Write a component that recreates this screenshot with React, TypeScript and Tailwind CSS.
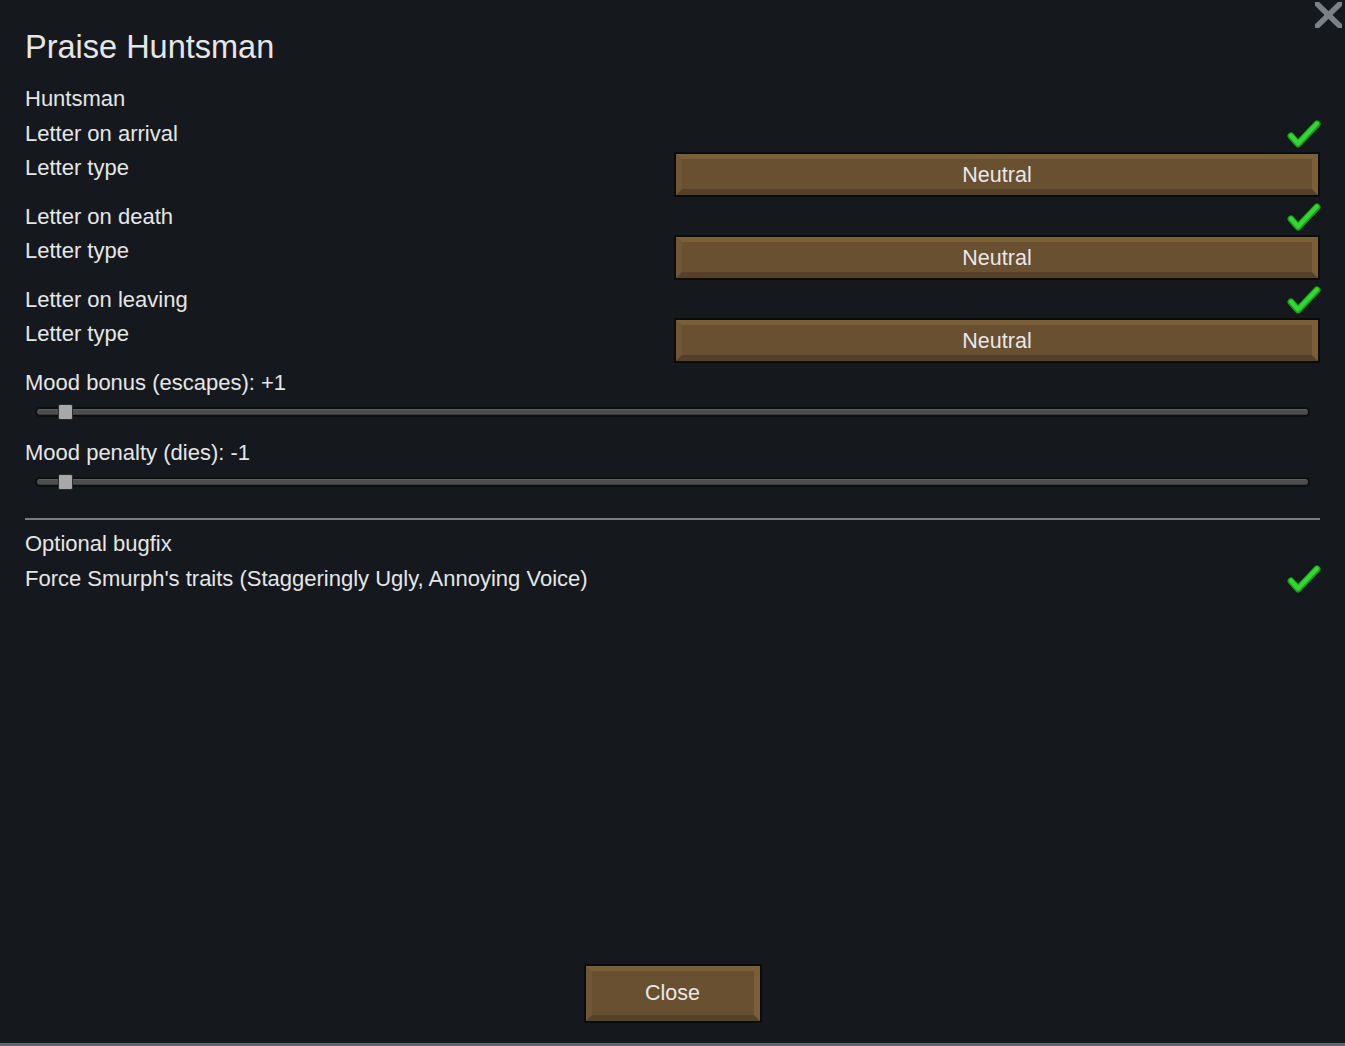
import type { ReactNode } from 'react'

const FONT = "font-['Liberation_Sans',Arial,sans-serif]"

function WoodButton({ label, className, textPad }: { label: string; className?: string; textPad: string }) {
  return (
    <div className={`border-2 border-[#0b0b0b] ${className ?? ''}`}>
      <div className={`flex h-full items-center justify-center border-[6px] border-t-[5px] border-t-[#7b6037] border-r-[#7b6037] border-b-[#55412a] border-l-[#6f5634] bg-[#685031] text-[21.5px] text-[#e8e8e8] ${textPad}`}>
        {label}
      </div>
    </div>
  )
}

function Check() {
  return (
    <svg width="36" height="32" viewBox="0 0 36 32" className="mr-[-2px]">
      <polyline points="5,19 12,27 31,7" fill="none" stroke="#0b1d0b" strokeWidth="9" strokeLinecap="round" strokeLinejoin="round" />
      <polyline points="5,19 12,27 31,7" fill="none" stroke="#1b9b1e" strokeWidth="7" strokeLinecap="round" strokeLinejoin="round" />
      <polyline points="5,18.5 12,26.5 31,6.5" fill="none" stroke="#34d634" strokeWidth="4.2" strokeLinecap="round" strokeLinejoin="round" />
    </svg>
  )
}

function Row({ children, right }: { children: ReactNode; right?: ReactNode }) {
  return (
    <div className="flex h-[35px] items-center justify-between">
      <span>{children}</span>
      {right}
    </div>
  )
}

function LetterTypeRow() {
  return (
    <div className="flex h-[48px] items-start justify-between">
      <span className="leading-[34px]">Letter type</span>
      <WoodButton label="Neutral" textPad="pt-[4px]" className="mt-[1px] h-[45px] w-[646px]" />
    </div>
  )
}

function Slider({ pos }: { pos: number }) {
  return (
    <div className="h-[35px] pt-[7px]">
      <div className="relative mx-[10px] h-[10px] rounded-full bg-[#0d0f11] p-[2px]">
        <div className="h-full rounded-full border-t border-t-[#5e5f60] border-b border-b-[#3a3b3c] bg-[#4c4d4e]" />
        <div
          className="absolute top-1/2 h-[16px] w-[15px] -translate-y-1/2 rounded-[2px] border border-[#2a2b2c] bg-[#a8a8a8]"
          style={{ left: pos }}
        />
      </div>
    </div>
  )
}

export default function App() {
  return (
    <div className={`relative flex h-[1046px] w-[1345px] flex-col bg-[#15191e] text-[22px] text-[#e6e6e6] ${FONT}`}>
      {/* close icon */}
      <svg className="absolute top-[2px] right-[3px]" width="27" height="26" viewBox="0 0 27 26">
        <line x1="-3" y1="-3" x2="30" y2="29" stroke="#7b8187" strokeWidth="5.6" />
        <line x1="30" y1="-3" x2="-3" y2="29" stroke="#7b8187" strokeWidth="5.6" />
      </svg>

      <div className="w-[1320px] pl-[25px]">
        <h1 className="mt-[28.5px] mb-[16px] text-[32.5px] leading-[36px]">Praise Huntsman</h1>

        <Row>Huntsman</Row>
        <Row right={<Check />}>Letter on arrival</Row>
        <LetterTypeRow />
        <Row right={<Check />}>Letter on death</Row>
        <LetterTypeRow />
        <Row right={<Check />}>Letter on leaving</Row>
        <LetterTypeRow />

        <Row>Mood bonus (escapes): +1</Row>
        <Slider pos={23} />
        <Row>Mood penalty (dies): -1</Row>
        <Slider pos={23} />

        <div className="mt-[13px] mb-[6px] h-[2px] bg-[#7c7d7e]" />

        <Row>Optional bugfix</Row>
        <Row right={<Check />}>Force Smurph's traits (Staggeringly Ugly, Annoying Voice)</Row>
      </div>

      <div className="flex-1" />
      <div className="flex justify-center pb-[20px]">
        <WoodButton label="Close" textPad="pt-[1px]" className="h-[59px] w-[178px]" />
      </div>
      <div className="h-[3px] bg-[#5d6775]" />
    </div>
  )
}
